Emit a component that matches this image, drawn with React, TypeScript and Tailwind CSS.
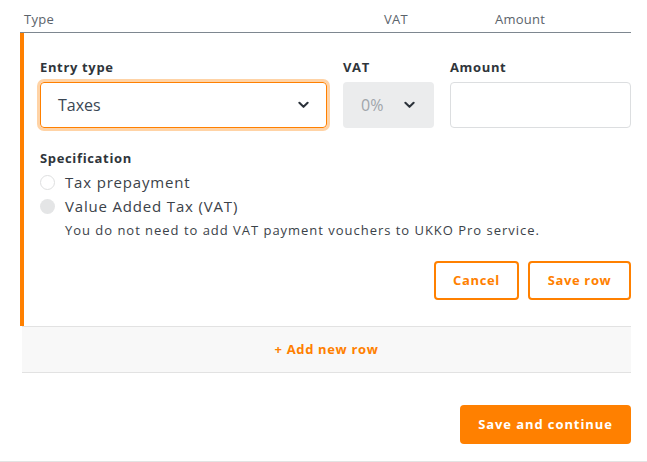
import React from 'react';

const Chevron = ({ className = '' }: { className?: string }) => (
  <svg viewBox="0 0 12 8" className={className} fill="none">
    <polyline points="1.5,1.5 6,6 10.5,1.5" stroke="currentColor" strokeWidth="2.2" strokeLinecap="round" strokeLinejoin="round" />
  </svg>
);

export default function App() {
  return (
    <div className="w-[647px] h-[462px] bg-white font-['Open_Sans',sans-serif] text-[#2f353b] flex flex-col border-b border-[#e3e3e3]">
      <div className="ml-[20px] w-[611px] flex flex-col">
        {/* table header */}
        <div className="h-[33px] flex items-end border-b border-[#7e8790] text-[13px] text-[#5b636b] pb-[3px] tracking-[0.02em]">
          <span className="pl-[4px] w-[364px]">Type</span>
          <span className="w-[111px]">VAT</span>
          <span>Amount</span>
        </div>

        {/* editing row */}
        <div className="border-l-4 border-[#ff8000] pl-[16px] pt-[25px] pb-[26px] flex flex-col">
          <div className="flex gap-[16px]">
            <div className="flex flex-col w-[287px]">
              <label className="text-[13px] font-bold leading-[18px] mb-[6px] tracking-[0.05em]">Entry type</label>
              <div className="h-[46px] rounded-[4px] border border-[#ff8000] ring-[3px] ring-[#ffd3a6] flex items-center justify-between pl-[17px] pr-[17px]">
                <span className="text-[16px] text-[#3b4754]">Taxes</span>
                <Chevron className="w-[11px] h-[8px] text-[#2b323a]" />
              </div>
            </div>
            <div className="flex flex-col w-[91px]">
              <label className="text-[13px] font-bold leading-[18px] mb-[6px] tracking-[0.05em]">VAT</label>
              <div className="h-[46px] rounded-[4px] bg-[#ebeced] flex items-center justify-between pl-[18px] pr-[19px]">
                <span className="text-[16px] text-[#a0a5aa]">0%</span>
                <Chevron className="w-[11px] h-[8px] text-[#2b323a]" />
              </div>
            </div>
            <div className="flex flex-col w-[181px]">
              <label className="text-[13px] font-bold leading-[18px] mb-[6px] tracking-[0.05em]">Amount</label>
              <div className="h-[46px] rounded-[4px] border border-[#dcdee0] bg-white" />
            </div>
          </div>

          <div className="mt-[21px] text-[13px] font-bold leading-[18px] tracking-[0.05em]">Specification</div>
          <div className="flex flex-col mt-[3px]">
            <div className="flex items-center h-[24px] gap-[10px]">
              <span className="w-[15px] h-[15px] rounded-full border border-[#dedfe0] bg-white" />
              <span className="text-[15px] text-[#3b4249] tracking-[0.055em]">Tax prepayment</span>
            </div>
            <div className="flex items-center h-[24px] gap-[10px]">
              <span className="w-[15px] h-[15px] rounded-full bg-[#e4e5e6]" />
              <span className="text-[15px] text-[#3b4249] tracking-[0.055em]">Value Added Tax (VAT)</span>
            </div>
            <div className="pl-[25px] text-[13px] leading-[24px] text-[#3b4249] tracking-[0.075em]">
              You do not need to add VAT payment vouchers to UKKO Pro service.
            </div>
          </div>

          <div className="flex justify-end gap-[9px] mt-[19px]">
            <button className="w-[85px] h-[39px] rounded-[4px] border-2 border-[#ff8000] text-[#ff8000] text-[13px] font-bold tracking-[0.05em]">
              Cancel
            </button>
            <button className="w-[103px] h-[39px] rounded-[4px] border-2 border-[#ff8000] text-[#ff8000] text-[13px] font-bold tracking-[0.05em]">
              Save row
            </button>
          </div>
        </div>

        {/* add row */}
        <div className="ml-[2px] h-[47px] bg-[#f8f8f8] border-y border-[#e2e2e2] flex items-center justify-center">
          <span className="text-[13px] font-bold text-[#ff8000] tracking-[0.05em]">+ Add new row</span>
        </div>

        <div className="flex justify-end mt-[32px]">
          <button className="w-[171px] h-[39px] rounded-[4px] bg-[#ff8000] text-white text-[13px] font-bold tracking-[0.07em]">
            Save and continue
          </button>
        </div>
      </div>
    </div>
  );
}
